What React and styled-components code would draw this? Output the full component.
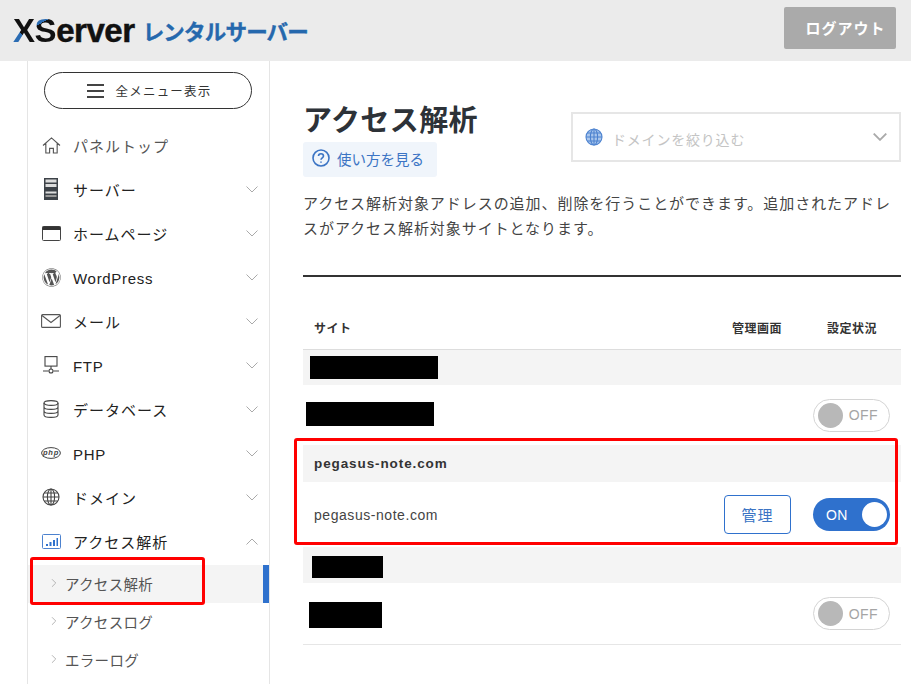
import React from 'react';
import styled, { createGlobalStyle } from 'styled-components';
import { FaWordpress } from 'react-icons/fa';
import { ChevronRight } from 'lucide-react';

const GlobalStyle = createGlobalStyle`
  html, body { margin: 0; padding: 0; background: #fff; }
  body {
    width: 911px;
    height: 684px;
    overflow: hidden;
    font-family: "Liberation Sans", "Noto Sans CJK JP", sans-serif;
    color: #333;
  }
  * { box-sizing: border-box; }
`;

const Header = styled.header`
  height: 61px;
  background: #ebebeb;
  display: flex;
  align-items: center;
  justify-content: space-between;
  padding: 0 15px 0 13px;
`;

const Logo = styled.div`
  display: flex;
  align-items: center;
  gap: 8px;
`;

const LogoMain = styled.span`
  font-size: 33px;
  font-weight: 700;
  letter-spacing: -0.45px;
  color: #111;
  -webkit-text-stroke: 0.5px #111;
`;

const LogoLetter = styled.span`
  background: linear-gradient(${(p) => p.$angle}, #2a6cb3 ${(p) => p.$stop}, #111 ${(p) => p.$stop});
  -webkit-background-clip: text;
  background-clip: text;
  color: transparent;
  -webkit-text-stroke: 0;
`;

const LogoSub = styled.span`
  font-size: 21.5px;
  font-weight: 700;
  letter-spacing: -0.8px;
  color: #2568ad;
  -webkit-text-stroke: 0.4px #2568ad;
`;

const LogoutButton = styled.button`
  width: 112px;
  height: 42px;
  margin-bottom: 5px;
  padding: 0 0 2px 11px;
  border: none;
  border-radius: 2px;
  background: #aaa;
  color: #fff;
  font: 700 15px "Liberation Sans", "Noto Sans CJK JP", sans-serif;
  letter-spacing: 1px;
`;

const Body = styled.div`
  display: flex;
  height: 623px;
  padding-left: 27px;
`;

const Sidebar = styled.nav`
  width: 243px;
  flex: none;
  border-left: 1px solid #e5e5e5;
  border-right: 1px solid #e5e5e5;
  padding-top: 11px;
`;

const MenuButton = styled.button`
  display: flex;
  align-items: center;
  justify-content: center;
  gap: 12px;
  width: 208px;
  height: 37px;
  margin: 0 0 14px 16px;
  padding-left: 8px;
  border: 1px solid #333;
  border-radius: 19px;
  background: #fff;
  color: #333;
  font: 400 12.5px "Liberation Sans", "Noto Sans CJK JP", sans-serif;
  letter-spacing: 1.2px;
`;

const Burger = styled.span`
  width: 17px;
  height: 14px;
  border-top: 2px solid #444;
  border-bottom: 2px solid #444;
  position: relative;
  &::after {
    content: '';
    position: absolute;
    left: 0;
    right: 0;
    top: 4px;
    height: 2px;
    background: #444;
  }
`;

const NavItem = styled.div`
  height: 44px;
  display: flex;
  align-items: center;
  padding: 0 11px 0 13px;
  font-size: 15px;
  letter-spacing: ${(p) => (p.$latin ? '0.7px' : '1px')};
  color: ${(p) => (p.$muted ? '#555' : '#222')};
`;

const NavIcon = styled.span`
  width: 20px;
  height: 24px;
  margin-right: 12px;
  display: flex;
  align-items: center;
  justify-content: center;
  color: #555;
  flex: none;
`;

const NavLabel = styled.span`
  flex: 1;
  padding-top: ${(p) => (p.$latin ? '2px' : '0')};
`;

const SubList = styled.div`
  margin-top: 2px;
`;

const SubItem = styled.div`
  position: relative;
  height: 38px;
  display: flex;
  align-items: center;
  gap: 4px;
  padding: 0 0 2px 19px;
  font-size: 14.5px;
  letter-spacing: 0.3px;
  color: #555;
  background: ${(p) => (p.$active ? '#f4f4f4' : 'transparent')};
  border-right: ${(p) => (p.$active ? '6px solid #2f71cd' : 'none')};
`;

const RedFrame = styled.span`
  position: absolute;
  pointer-events: none;
  border: 3px solid #f00;
  border-radius: 3px;
  left: ${(p) => p.$left}px;
  top: ${(p) => p.$top}px;
  width: ${(p) => p.$width}px;
  height: ${(p) => p.$height}px;
`;

const Main = styled.main`
  flex: 1;
  padding: 29px 10px 0 33px;
  min-width: 0;
`;

const TitleRow = styled.div`
  display: flex;
  justify-content: space-between;
  align-items: flex-start;
`;

const Title = styled.h1`
  margin: 10px 0 0;
  font-size: 29px;
  line-height: 42px;
  font-weight: 700;
  letter-spacing: 0.4px;
  color: #2d3238;
`;

const HelpLink = styled.a`
  display: flex;
  align-items: center;
  gap: 7px;
  width: 134px;
  height: 35px;
  padding: 0 0 3px 9px;
  border-radius: 3px;
  background: #f0f5fb;
  color: #3b74c4;
  font-size: 14.5px;
`;

const DomainSelect = styled.div`
  width: 330px;
  height: 50px;
  margin: 22px 0 0 0;
  border: 2px solid #e6e6e6;
  display: flex;
  align-items: center;
  padding: 0 12px;
  color: #c4c4c4;
  font-size: 14px;
  letter-spacing: 0.8px;
  gap: 9px;
`;

const SelectText = styled.span`
  flex: 1;
  padding-top: 4px;
`;

const Description = styled.p`
  margin: 14px 0 0;
  font-size: 15px;
  line-height: 25px;
  letter-spacing: 0.95px;
  color: #444;
`;

const Rule = styled.hr`
  margin: 34px 0 0;
  border: none;
  height: 2px;
  background: #333;
`;

const TableHead = styled.div`
  height: 73px;
  display: flex;
  align-items: flex-end;
  padding: 0 24px 13px 11px;
  border-bottom: 1px solid #ddd;
  font-size: 12px;
  font-weight: 700;
  letter-spacing: 0.5px;
  color: #333;
`;

const HeadSite = styled.span`
  flex: 1;
`;

const HeadAdmin = styled.span`
  margin-right: 45px;
`;

const GroupRow = styled.div`
  position: relative;
  height: ${(p) => p.$height}px;
  display: flex;
  align-items: center;
  padding-left: ${(p) => p.$pad || 11}px;
  background: #f4f4f4;
  font-size: 13.5px;
  font-weight: 700;
  letter-spacing: 0.9px;
  color: #333;
`;

const SiteRow = styled.div`
  height: ${(p) => p.$height}px;
  display: flex;
  align-items: center;
  padding: 0 11px 0 ${(p) => p.$pad || 11}px;
  font-size: 14px;
  letter-spacing: 0.55px;
  color: #444;
  border-bottom: ${(p) => (p.$border ? '1px solid #e6e6e6' : 'none')};
`;

const Spacer = styled.span`
  flex: 1;
`;

const Redacted = styled.span`
  display: block;
  background: #000;
  width: ${(p) => p.$width}px;
  height: ${(p) => p.$height}px;
  margin-top: ${(p) => p.$shift || 0}px;
`;

const ManageButton = styled.button`
  width: 67px;
  height: 39px;
  margin-right: 22px;
  border: 1px solid #2f71cd;
  border-radius: 4px;
  background: #fff;
  color: #3b74c4;
  font: 400 15px "Liberation Sans", "Noto Sans CJK JP", sans-serif;
  letter-spacing: 1px;
`;

const Toggle = styled.div`
  width: 77px;
  height: 33px;
  border-radius: 17px;
  display: flex;
  align-items: center;
  justify-content: space-between;
  padding: ${(p) => (p.$on ? '0 3px 0 13px' : '0 11px 0 4px')};
  font-size: 14px;
  letter-spacing: 0.4px;
  background: ${(p) => (p.$on ? '#2f71cd' : '#fff')};
  border: ${(p) => (p.$on ? 'none' : '1px solid #d4d4d4')};
  color: ${(p) => (p.$on ? '#fff' : '#a5a5a5')};
`;

const Knob = styled.span`
  width: 25px;
  height: 25px;
  border-radius: 50%;
  background: ${(p) => (p.$on ? '#fff' : '#b8b8b8')};
`;

const Chevron = ({ up, width = 12, color = '#aaa', strokeWidth = 1 }) => (
  <svg width={width} height={width / 2 + 1} viewBox="0 0 12 7" fill="none" stroke={color} strokeWidth={strokeWidth}>
    <path d={up ? 'M.5 6.500 6 1l5.500 5.500' : 'M.5.500 6 6l5.500-5.500'} />
  </svg>
);

const HomeIcon = () => (
  <svg width="19" height="17" viewBox="0 0 20 18" fill="none" stroke="#555" strokeWidth="1.2">
    <path d="M1 9 10 1l9 8M4 7v10h4v-5h4v5h4V7" />
  </svg>
);

const ServerIcon = () => (
  <svg width="14" height="22" viewBox="0 0 14 22">
    <rect width="14" height="22" fill="#3d4248" />
    <rect x="1.500" y="1.500" width="11" height="3" fill="#ddd" />
    <rect x="1.500" y="6" width="11" height="3" fill="#ddd" />
    <rect x="1.500" y="13.500" width="11" height="2" fill="#ddd" />
    <rect x="1.500" y="17" width="11" height="2" fill="#999" />
  </svg>
);

const BrowserIcon = () => (
  <svg width="19" height="15" viewBox="0 0 19 15" fill="none">
    <rect x=".5" y=".5" width="18" height="14" rx="1" stroke="#444" />
    <rect x=".5" y=".5" width="18" height="3.500" fill="#333" />
  </svg>
);

const MailIcon = () => (
  <svg width="20" height="14" viewBox="0 0 20 14" fill="none" stroke="#555" strokeWidth="1.1">
    <rect x=".6" y=".6" width="18.800" height="12.800" rx="1" />
    <path d="m1 1.500 9 7 9-7" />
  </svg>
);

const NetworkIcon = () => (
  <svg width="16" height="18" viewBox="0 0 16 18" fill="none" stroke="#444" strokeWidth="1.1">
    <rect x="2" y=".6" width="12" height="9.500" />
    <path d="M8 10v3.500M0 15h5.500M10.500 15H16" />
    <circle cx="8" cy="15" r="2" />
  </svg>
);

const DatabaseIcon = () => (
  <svg width="16" height="18" viewBox="0 0 16 18" fill="none" stroke="#444" strokeWidth="1.1">
    <ellipse cx="8" cy="3" rx="7" ry="2.400" />
    <path d="M1 3v12c0 1.300 3.100 2.400 7 2.400s7-1.100 7-2.400V3M1 7c0 1.300 3.100 2.400 7 2.400S15 8.300 15 7M1 11c0 1.300 3.100 2.400 7 2.400s7-1.100 7-2.400" />
  </svg>
);

const PhpIcon = () => (
  <svg width="20" height="12" viewBox="0 0 20 12" fill="none">
    <ellipse cx="10" cy="6" rx="9.400" ry="5.400" stroke="#444" />
    <text x="10" y="8.300" textAnchor="middle" fontSize="7.500" fontWeight="700" fontStyle="italic" fill="#444" fontFamily="Liberation Sans">php</text>
  </svg>
);

const GlobeIcon = ({ size = 18, color = '#444', fill = 'none' }) => (
  <svg width={size} height={size} viewBox="0 0 18 18" fill={fill} stroke={color} strokeWidth="1.100">
    <circle cx="9" cy="9" r="8" />
    <ellipse cx="9" cy="9" rx="3.600" ry="8" />
    <path d="M9 1v16M1 9h16M2.200 5h13.600M2.200 13h13.600" />
  </svg>
);

const ChartIcon = () => (
  <svg width="19" height="15" viewBox="0 0 19 15" fill="none">
    <rect x=".5" y=".5" width="18" height="14" rx="1" stroke="#4c82cf" />
    <path d="M4 10h2v2H4zM7.500 8h2v4h-2zM11 6h2v6h-2zM14.500 4h1.500v8h-1.500z" fill="#2f71cd" />
  </svg>
);

const HelpIcon = () => (
  <svg width="18" height="18" viewBox="0 0 18 18" fill="none" stroke="#3b74c4" strokeWidth="1.600">
    <circle cx="9" cy="9" r="8" />
    <path d="M6.500 7c0-1.500 1.100-2.300 2.500-2.300S11.500 5.500 11.500 7c0 1.800-2.500 1.900-2.500 3.800" />
    <path d="M9 12.500v1.300" />
  </svg>
);

const navItems = [
  { label: 'パネルトップ', icon: <HomeIcon />, muted: true, plain: true },
  { label: 'サーバー', icon: <ServerIcon /> },
  { label: 'ホームページ', icon: <BrowserIcon /> },
  { label: 'WordPress', icon: <FaWordpress size={19} />, latin: true },
  { label: 'メール', icon: <MailIcon /> },
  { label: 'FTP', icon: <NetworkIcon />, latin: true },
  { label: 'データベース', icon: <DatabaseIcon /> },
  { label: 'PHP', icon: <PhpIcon />, latin: true },
  { label: 'ドメイン', icon: <GlobeIcon /> },
  { label: 'アクセス解析', icon: <ChartIcon />, open: true },
];

const subItems = ['アクセス解析', 'アクセスログ', 'エラーログ'];

function App() {
  return (
    <>
      <GlobalStyle />
      <Header>
        <Logo>
          <LogoMain>
            <LogoLetter $angle="45deg" $stop="40%">X</LogoLetter>
            <LogoLetter $angle="150deg" $stop="30%">S</LogoLetter>erver
          </LogoMain>
          <LogoSub>レンタルサーバー</LogoSub>
        </Logo>
        <LogoutButton>ログアウト</LogoutButton>
      </Header>
      <Body>
        <Sidebar>
          <MenuButton>
            <Burger />
            全メニュー表示
          </MenuButton>
          {navItems.map((item) => (
            <NavItem key={item.label} $muted={item.muted} $latin={item.latin}>
              <NavIcon>{item.icon}</NavIcon>
              <NavLabel $latin={item.latin}>{item.label}</NavLabel>
              {!item.plain && <Chevron up={item.open} />}
            </NavItem>
          ))}
          <SubList>
            {subItems.map((label, i) => (
              <SubItem key={label} $active={i === 0}>
                <ChevronRight size={14} color="#aaa" strokeWidth={1.5} />
                {label}
                {i === 0 && <RedFrame $left={2} $top={-8} $width={175} $height={48} />}
              </SubItem>
            ))}
          </SubList>
        </Sidebar>
        <Main>
          <TitleRow>
            <div>
              <Title>アクセス解析</Title>
              <HelpLink>
                <HelpIcon />
                使い方を見る
              </HelpLink>
            </div>
            <DomainSelect>
              <GlobeIcon size={18} color="#4c82cf" fill="#a9c6ec" />
              <SelectText>ドメインを絞り込む</SelectText>
              <Chevron width={14} strokeWidth={1.6} />
            </DomainSelect>
          </TitleRow>
          <Description>
            アクセス解析対象アドレスの追加、削除を行うことができます。追加されたアドレスがアクセス解析対象サイトとなります。
          </Description>
          <Rule />
          <TableHead>
            <HeadSite>サイト</HeadSite>
            <HeadAdmin>管理画面</HeadAdmin>
            <span>設定状況</span>
          </TableHead>
          <GroupRow $height={35} $pad={7}>
            <Redacted $width={128} $height={23} />
          </GroupRow>
          <SiteRow $height={60} $pad={3}>
            <Redacted $width={128} $height={24} $shift={-2} />
            <Spacer />
            <Toggle>
              <Knob />
              OFF
            </Toggle>
          </SiteRow>
          <GroupRow $height={37}>
            pegasus-note.com
            <RedFrame $left={-9} $top={-7} $width={604} $height={107} />
          </GroupRow>
          <SiteRow $height={65}>
            pegasus-note.com
            <Spacer />
            <ManageButton>管理</ManageButton>
            <Toggle $on>
              ON
              <Knob $on />
            </Toggle>
          </SiteRow>
          <GroupRow $height={36} $pad={9}>
            <Redacted $width={71} $height={22} $shift={4} />
          </GroupRow>
          <SiteRow $height={62} $pad={6} $border>
            <Redacted $width={73} $height={26} $shift={2} />
            <Spacer />
            <Toggle>
              <Knob />
              OFF
            </Toggle>
          </SiteRow>
        </Main>
      </Body>
    </>
  );
}

export default App;
